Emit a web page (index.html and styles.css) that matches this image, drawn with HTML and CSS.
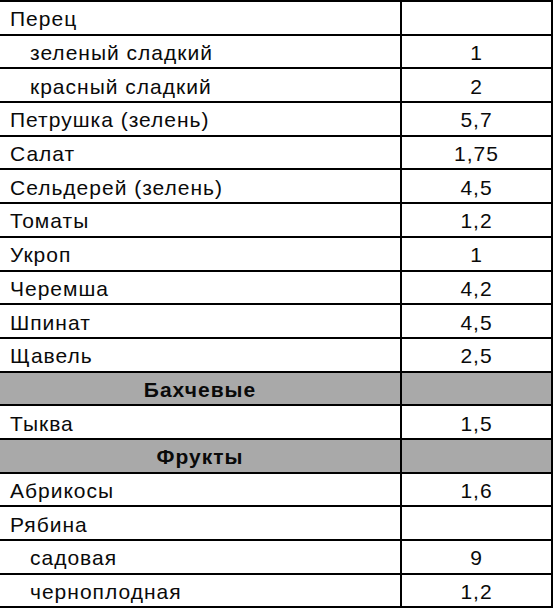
FILE: index.html
```html
<!DOCTYPE html>
<html>
<head>
<meta charset="utf-8">
<link rel="stylesheet" href="styles.css">
</head>
<body>
<div class="table">
  <div class="row"><div class="name">Перец</div><div class="val"></div></div>
  <div class="row"><div class="name sub">зеленый сладкий</div><div class="val">1</div></div>
  <div class="row"><div class="name sub">красный сладкий</div><div class="val">2</div></div>
  <div class="row"><div class="name">Петрушка (зелень)</div><div class="val">5,7</div></div>
  <div class="row"><div class="name">Салат</div><div class="val">1,75</div></div>
  <div class="row"><div class="name">Сельдерей (зелень)</div><div class="val">4,5</div></div>
  <div class="row"><div class="name">Томаты</div><div class="val">1,2</div></div>
  <div class="row"><div class="name">Укроп</div><div class="val">1</div></div>
  <div class="row"><div class="name">Черемша</div><div class="val">4,2</div></div>
  <div class="row"><div class="name">Шпинат</div><div class="val">4,5</div></div>
  <div class="row"><div class="name">Щавель</div><div class="val">2,5</div></div>
  <div class="row group"><div class="name">Бахчевые</div><div class="val"></div></div>
  <div class="row"><div class="name">Тыква</div><div class="val">1,5</div></div>
  <div class="row group"><div class="name">Фрукты</div><div class="val"></div></div>
  <div class="row"><div class="name">Абрикосы</div><div class="val">1,6</div></div>
  <div class="row"><div class="name">Рябина</div><div class="val"></div></div>
  <div class="row"><div class="name sub">садовая</div><div class="val">9</div></div>
  <div class="row last"><div class="name sub">черноплодная</div><div class="val">1,2</div></div>
</div>
</body>
</html>
```
FILE: styles.css
```css
html, body {
  margin: 0;
  padding: 0;
  background: #fff;
}
body {
  font-family: "Liberation Sans", Arial, sans-serif;
  font-size: 21px;
  letter-spacing: 1px;
  color: #0a0a0a;
}
.table {
  width: 553px;
}
.row {
  display: grid;
  grid-template-columns: 402px 151px;
  height: 33.7px;
  box-sizing: border-box;
  border-top: 2px solid #000;
}
.row.last {
  height: 35.7px;
  border-bottom: 2px solid #000;
}
.name, .val {
  display: flex;
  align-items: center;
  padding-top: 3px;
  box-sizing: border-box;
  white-space: nowrap;
}
.name {
  padding-left: 10px;
  border-right: 2px solid #000;
}
.name.sub {
  padding-left: 30px;
}
.val {
  justify-content: center;
  border-right: 2px solid #000;
}
.group {
  background: #a9a9a9;
}
.group .name {
  justify-content: center;
  font-weight: bold;
  padding-left: 0;
}
```
